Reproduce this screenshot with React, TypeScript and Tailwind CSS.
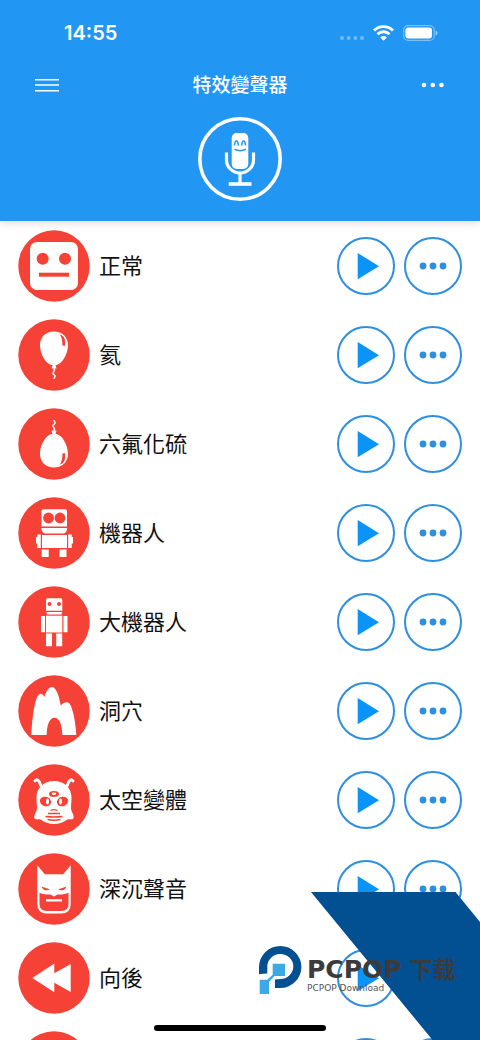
import React from "react";

const NormalIcon = () => (
  <>
    <rect x="12" y="12" width="48" height="48" rx="7" fill="#fff" />
    <circle cx="24.7" cy="28.7" r="6" fill="#f64236" />
    <circle cx="47" cy="28.7" r="6" fill="#f64236" />
    <rect x="21" y="42.7" width="30" height="4" fill="#f64236" />
  </>
);

const BalloonIcon = () => (
  <>
    <path d="M36 12.5c8.300 0 14 5.800 14 13.500C50 35.500 43.500 46 37.500 46l1 3.500h-5l1-3.500C28.500 46 22 35.500 22 26c0-7.700 5.700-13.500 14-13.500z" fill="#fff" />
    <path d="M36 49.500c2 2.500-1.500 3-1 5 .3 1.500 2.500 1 2 3-.2 1-1 1-1 2.500" fill="none" stroke="#fff" strokeWidth="1.500" />
    <path d="M42 15.500c4.200 1 6 5.500 4.800 11.500l-2.400-.8c.2-4-.7-7.600-2.400-10.700z" fill="#f64236" />
  </>
);

const HeavyBalloonIcon = () => (
  <g transform="matrix(1 0 0 -1 0 72)">
    <BalloonIcon />
  </g>
);

const RobotIcon = () => (
  <>
    <path d="M25.500 12.300h21.500q2 0 2 2v15.200H23.500V14.300q0-2 2-2z" fill="#fff" />
    <circle cx="30.500" cy="21" r="5.400" fill="#f64236" />
    <circle cx="42" cy="21" r="5.400" fill="#f64236" />
    <path d="M23.500 31H49v1.500q-1 4-4 4H27.500q-3 0-4-4z" fill="#fff" />
    <rect x="24" y="38" width="25" height="13" fill="#fff" />
    <path d="M19.300 37.500h3.500V51h-3.500v-4.500H18V40h1.300zM50.200 37.500h3.500V40H55v6.500h-1.300V51h-3.500z" fill="#fff" />
    <path d="M23.700 52.500h7V60h-7zM41.500 52.500h7V60h-7z" fill="#fff" />
  </>
);

const BigRobotIcon = () => (
  <>
    <path d="M29.500 12.300h13.300q1.500 0 1.500 1.500v10.900H28V13.800q0-1.500 1.500-1.500z" fill="#fff" />
    <circle cx="31.500" cy="18" r="2" fill="#f64236" />
    <circle cx="41" cy="18" r="2" fill="#f64236" />
    <path d="M28.300 26h16l-1 2.600h-14z" fill="#fff" />
    <rect x="28" y="29.700" width="16.300" height="16.800" fill="#fff" />
    <path d="M23 30h4v16.300h-4zM45.500 30h4v16.300h-4z" fill="#fff" />
    <path d="M28 47.500h6v12.800h-6zM38.200 47.500h6v12.800h-6z" fill="#fff" />
  </>
);

const CaveIcon = () => (
  <path d="M13.300 60C14 46 15.500 32 18.700 23c1-2.700 2.500-4.300 4-4.300 1.600 0 2.800 1.500 3.600 3.300C28.500 15.500 31 12 33.700 12c4 0 7.300 7.500 9 18.700 2-2.400 4-3.400 6-3.400 2.600 0 4 2.700 5 5.700 2.800 8 4 17.500 4.600 27h-14c0-9-2.500-17.300-7.800-17.300S28.700 51 28.700 60z" fill="#fff" />
);

const AlienIcon = () => (
  <>
    <path d="M17 17c1.500-2.500 4.500-1 5.500 4l2.500 3M55 17c-1.500-2.500-4.500-1-5.500 4L47 24" fill="none" stroke="#fff" strokeWidth="2.900" strokeLinecap="round" />
    <path d="M36 17c-10.500 0-17.500 7-17.500 16.500 0 5 .5 7.500.5 10.500 0 4-3.500 6.500-2.500 10.500 1.500 1.500 4 .5 6 1C26 58 31 60 36 60s10-2 13.500-4.500c2-.5 4.500.5 6-1 1-4-2.500-6.500-2.500-10.500 0-3 .5-5.500.5-10.500C53.500 24 46.500 17 36 17z" fill="#fff" />
    <ellipse cx="27.500" cy="37.500" rx="5.700" ry="4.700" transform="rotate(20 27.500 37.500)" fill="#f64236" />
    <ellipse cx="44.500" cy="37.500" rx="5.700" ry="4.700" transform="rotate(-20 44.500 37.500)" fill="#f64236" />
    <ellipse cx="29.500" cy="37.500" rx="1.500" ry="3" fill="#fff" />
    <ellipse cx="42.500" cy="37.500" rx="1.500" ry="3" fill="#fff" />
    <ellipse cx="36" cy="30" rx="5" ry="2.900" fill="#f64236" />
    <ellipse cx="36" cy="29.700" rx="2.200" ry="1.300" fill="#fff" />
    <path d="M32.500 46.500q3.500-1.800 7 0M30 49.500h12M27.500 52.500q8.500 1 17 0M29.500 55.500q6.500 1.500 13 0" fill="none" stroke="#f64236" strokeWidth="1.300" />
  </>
);

const BatIcon = () => (
  <>
    <path d="M19.300 12.300l7.500 9h18.400l7.500-9V51q0 9.500-9.500 9.500H28.800q-9.500 0-9.500-9.500z" fill="#fff" />
    <path d="M21.500 39.800c3 1.500 7 2 11 1.700l3.500 2 3.500-2c4 .3 8-.2 11-1.700V51q0 7-7 7h-15q-7 0-7-7z" fill="#f64236" />
    <path d="M23.500 33.500l8.500 3c-3 1.500-7 1.300-8.500-3zM48.500 33.500l-8.500 3c3 1.500 7 1.300 8.500-3z" fill="#f64236" />
    <rect x="28" y="46.200" width="16" height="2.300" fill="#fff" />
  </>
);

const BackwardIcon = () => (
  <path d="M14.300 36l22-14.500v9.800L52.700 22v28l-16.400-9.300v9.600z" fill="#fff" />
);

type Effect = { name: string; Icon: React.FC | null };

const effects: Effect[] = [
  { name: "正常", Icon: NormalIcon },
  { name: "氦", Icon: BalloonIcon },
  { name: "六氟化硫", Icon: HeavyBalloonIcon },
  { name: "機器人", Icon: RobotIcon },
  { name: "大機器人", Icon: BigRobotIcon },
  { name: "洞穴", Icon: CaveIcon },
  { name: "太空變體", Icon: AlienIcon },
  { name: "深沉聲音", Icon: BatIcon },
  { name: "向後", Icon: BackwardIcon },
  { name: "", Icon: null },
];

const EffectRow = ({ name, Icon }: Effect) => (
  <li className="flex h-[89px] shrink-0 items-center px-[18px]">
    <svg className="h-[72px] w-[72px] shrink-0" viewBox="0 0 72 72">
      <circle cx="36" cy="36" r="35.700" fill="#f64236" />
      {Icon && <Icon />}
    </svg>
    <span className="ml-[9px] flex-1 pb-1 text-[22px] leading-8 text-[#111]">{name}</span>
    <div className="flex gap-[9px]">
      <button className="h-[58px] w-[58px] rounded-full border-2 border-[#2e8fe0]">
        <svg className="h-[54px] w-[54px]" viewBox="2 2 54 54">
          <path d="M20.700 16v26.300L42 29.200z" fill="#0a94f8" />
        </svg>
      </button>
      <button className="h-[58px] w-[58px] rounded-full border-2 border-[#2e8fe0]">
        <svg className="h-[54px] w-[54px]" viewBox="2 2 54 54" fill="#2e8fe0">
          <circle cx="19" cy="29" r="3.400" />
          <circle cx="29" cy="29" r="3.400" />
          <circle cx="39" cy="29" r="3.400" />
        </svg>
      </button>
    </div>
  </li>
);

const Header = () => (
  <header className="z-10 shrink-0 bg-[#2196f3] pb-5 text-white shadow-[0_2px_8px_rgba(60,20,20,0.16)]">
    {/* Status bar */}
    <div className="flex h-[66px] items-center justify-between pl-16 pr-[42px]">
      <span className="font-['Inter'] text-[20px] font-semibold leading-6">14:55</span>
      <div className="flex items-center gap-[9px]">
        <svg className="h-4 w-[25px]" viewBox="0 0 25 16" fill="#fff" opacity=".35">
          <circle cx="3" cy="13" r="2" />
          <circle cx="9.700" cy="13" r="2" />
          <circle cx="16.400" cy="13" r="2" />
          <circle cx="23" cy="13" r="2" />
        </svg>
        <svg className="h-4 w-[21px]" viewBox="0 0 21 16" fill="none" stroke="#fff" strokeWidth="2.900">
          <path d="M1 5.500a13.500 13.500 0 0 1 19 0" />
          <path d="M4.500 9.300a8.500 8.500 0 0 1 12 0" />
          <path d="M10.500 15.800l-3.300-3.400a4.700 4.700 0 0 1 6.600 0z" fill="#fff" stroke="none" />
        </svg>
        <svg className="h-4 w-[35px]" viewBox="0 0 35 16">
          <rect x=".6" y=".6" width="30.600" height="14.800" rx="4.500" fill="none" stroke="#fff" strokeOpacity=".4" strokeWidth="1.200" />
          <rect x="2.400" y="2.400" width="26.600" height="11.200" rx="3" fill="#fff" />
          <path d="M32.600 5.500q2 .8 2 2.500t-2 2.500z" fill="#fff" opacity=".5" />
        </svg>
      </div>
    </div>

    {/* Title bar */}
    <div className="flex h-[38px] items-center justify-between px-[35px]">
      <button aria-label="選單">
        <svg className="h-6 w-6" viewBox="0 0 24 24" stroke="#fff" strokeWidth="1.600">
          <path d="M0 6.700h24M0 12h24M0 17.700h24" />
        </svg>
      </button>
      <h1 className="pb-0.5 text-[19px] font-medium leading-7">特效變聲器</h1>
      <button aria-label="更多">
        <svg className="h-6 w-6" viewBox="0 0 24 24" fill="#fff">
          <circle cx="3" cy="12" r="2.300" />
          <circle cx="11.800" cy="12" r="2.300" />
          <circle cx="20.500" cy="12" r="2.300" />
        </svg>
      </button>
    </div>

    <button aria-label="錄音" className="mx-auto mt-[13px] block h-[84px] w-[84px]">
      <svg viewBox="0 0 84 84" fill="none" stroke="#fff">
        <circle cx="42" cy="42" r="40.200" strokeWidth="3.600" />
        <rect x="33.700" y="16" width="16.600" height="36" rx="5" fill="#fff" stroke="none" />
        <path d="M28.500 35.500V43a13.500 13 0 0 0 27 0v-7.500M42 56v10" strokeWidth="3.200" />
        <path d="M30.700 67h22.800" strokeWidth="3.600" />
        <path d="M36.500 28.500c.3-6 3.500-6 3.800 0M43.700 28.500c.3-6 3.500-6 3.800 0M36.500 32.200q5.500 3 11.500 0" stroke="#2196f3" strokeWidth="1.500" />
      </svg>
    </button>
  </header>
);

const Watermark = () => (
  <div className="pointer-events-none absolute bottom-0 right-0 h-[148px] w-[222px]">
    <svg className="absolute bottom-0 right-0 h-[148px] w-[169px]" viewBox="0 0 169 148">
      <path d="M0 0h144.500L169 30v118h-47.500z" fill="#024f92" />
    </svg>
    <div className="absolute left-px top-[54px] flex items-start gap-[5px]">
      <svg className="h-12 w-[43px]" viewBox="0 0 43 48">
        <path d="M0 28.300V21a21.200 21 0 1 1 21.200 21H16v-8.500l5-.5A13 12.500 0 1 0 8.300 21v6.500q-4 0-8.300.8z" fill="#024f92" />
        <path d="M13.700 17.700H26V30H15.500L10 36v12H.7V33.700h7.500l5.500-5z" fill="#3aa9e5" />
      </svg>
      <div className="whitespace-nowrap text-[#3b3b3b]">
        <div className="flex items-baseline gap-2 pt-[10px] leading-6">
          <span className="font-['DejaVu_Sans'] text-[25px] font-bold">PCPOP</span>
          <span className="font-['Noto_Sans_CJK_SC'] text-[23px] font-bold">下载</span>
        </div>
        <p className="font-['DejaVu_Sans'] text-[9px] leading-3 text-[#555]">PCPOP Download</p>
      </div>
    </div>
  </div>
);

export default function App() {
  return (
    <div className="relative flex h-screen flex-col overflow-hidden bg-white font-['Noto_Sans_CJK_TC',sans-serif]">
      <Header />
      <ul className="flex flex-1 flex-col overflow-hidden">
        {effects.map((effect, i) => (
          <EffectRow key={i} {...effect} />
        ))}
      </ul>
      <Watermark />
      {/* Home indicator */}
      <div className="absolute bottom-[9px] left-1/2 h-[6px] w-[172px] -translate-x-1/2 rounded-full bg-black" />
    </div>
  );
}
